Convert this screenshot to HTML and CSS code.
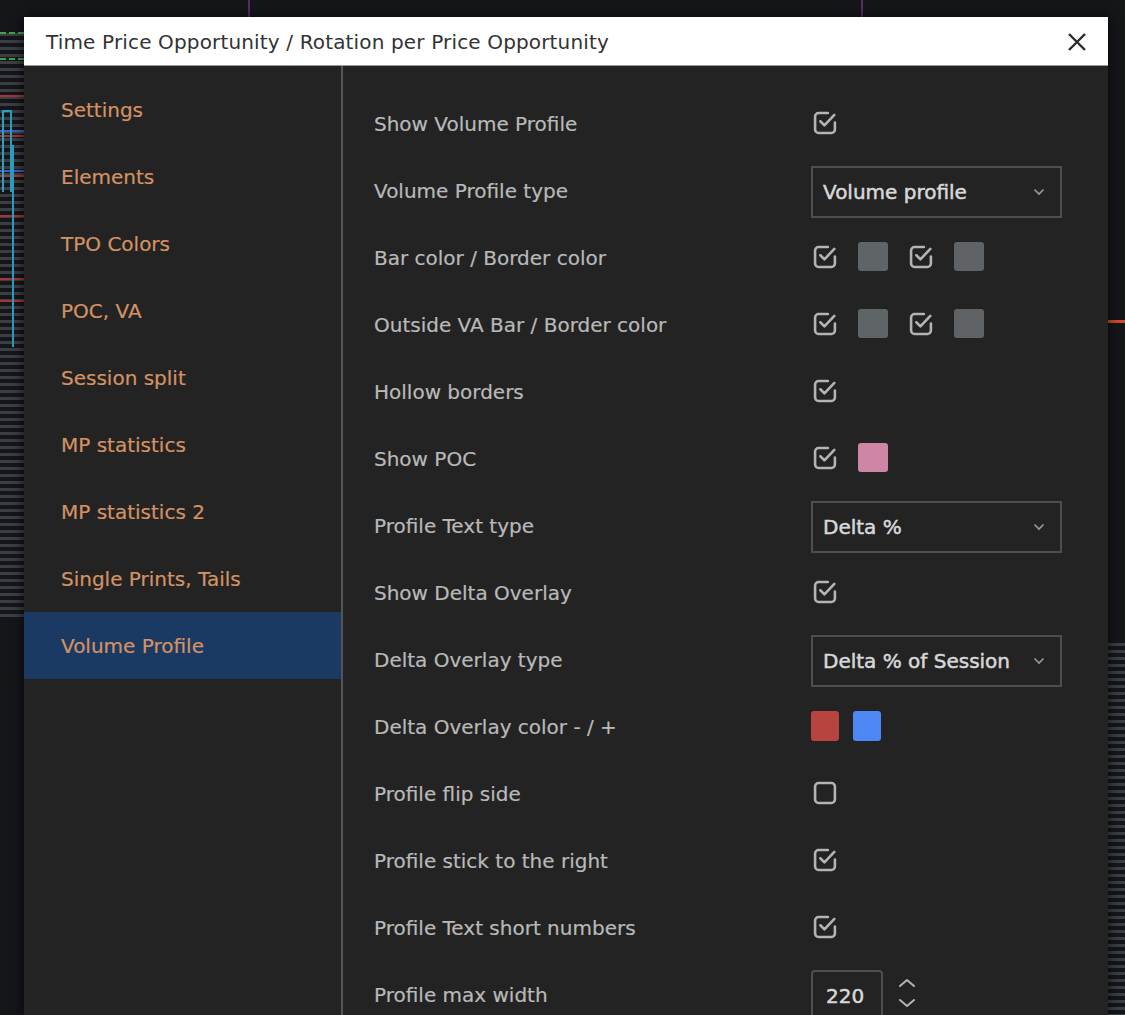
FILE: index.html
```html
<!DOCTYPE html>
<html>
<head>
<meta charset="utf-8">
<link rel="stylesheet" href="styles.css">
</head>
<body>
<div class="chart">
  <span class="vline v1"></span>
  <span class="vline v2"></span>
  <span class="grn g1"></span>
  <span class="grn g2"></span>
  <span class="rl" style="top:95px"></span>
  <span class="rl" style="top:135px"></span>
  <span class="rl" style="top:175px"></span>
  <span class="rl" style="top:215px"></span>
  <span class="rl" style="top:278px"></span>
  <span class="rl" style="top:300px"></span>
  <span class="bl" style="top:130px"></span>
  <span class="bl" style="top:170px"></span>
  <span class="cy c1"></span>
  <span class="cy c2"></span>
  <span class="rr1"></span>
  <span class="rstripes"></span>
</div>
<div class="dialog">
  <div class="titlebar">
    <span class="title">Time Price Opportunity / Rotation per Price Opportunity</span>
    <svg class="close" width="22" height="22" viewBox="0 0 22 22"><path d="M3 3 L19 19 M19 3 L3 19" stroke="#2b2b2b" stroke-width="2.4" fill="none"/></svg>
  </div>
  <div class="body">
    <nav class="nav">
      <div class="nav-item">Settings</div>
      <div class="nav-item">Elements</div>
      <div class="nav-item">TPO Colors</div>
      <div class="nav-item">POC, VA</div>
      <div class="nav-item">Session split</div>
      <div class="nav-item">MP statistics</div>
      <div class="nav-item">MP statistics 2</div>
      <div class="nav-item">Single Prints, Tails</div>
      <div class="nav-item active">Volume Profile</div>
    </nav>
    <div class="content">
      <div class="row"><span class="label">Show Volume Profile</span>
        <div class="ctrl"><svg class="cb" viewBox="0 0 24 24"><path d="M14.5 3.5 H6.5 a3 3 0 0 0 -3 3 V17.5 a3 3 0 0 0 3 3 H17.5 a3 3 0 0 0 3 -3 V11.5 M8 10.5 L11.5 14 L20 5"/></svg></div></div>
      <div class="row"><span class="label">Volume Profile type</span>
        <div class="ctrl"><div class="select"><span>Volume profile</span><svg class="chev" viewBox="0 0 12 8"><path d="M1.5 1.5 L6 6 L10.5 1.5"/></svg></div></div></div>
      <div class="row"><span class="label">Bar color / Border color</span>
        <div class="ctrl"><svg class="cb" viewBox="0 0 24 24"><path d="M14.5 3.5 H6.5 a3 3 0 0 0 -3 3 V17.5 a3 3 0 0 0 3 3 H17.5 a3 3 0 0 0 3 -3 V11.5 M8 10.5 L11.5 14 L20 5"/></svg><span class="sw gray"></span><svg class="cb" viewBox="0 0 24 24"><path d="M14.5 3.5 H6.5 a3 3 0 0 0 -3 3 V17.5 a3 3 0 0 0 3 3 H17.5 a3 3 0 0 0 3 -3 V11.5 M8 10.5 L11.5 14 L20 5"/></svg><span class="sw gray2"></span></div></div>
      <div class="row"><span class="label">Outside VA Bar / Border color</span>
        <div class="ctrl"><svg class="cb" viewBox="0 0 24 24"><path d="M14.5 3.5 H6.5 a3 3 0 0 0 -3 3 V17.5 a3 3 0 0 0 3 3 H17.5 a3 3 0 0 0 3 -3 V11.5 M8 10.5 L11.5 14 L20 5"/></svg><span class="sw gray"></span><svg class="cb" viewBox="0 0 24 24"><path d="M14.5 3.5 H6.5 a3 3 0 0 0 -3 3 V17.5 a3 3 0 0 0 3 3 H17.5 a3 3 0 0 0 3 -3 V11.5 M8 10.5 L11.5 14 L20 5"/></svg><span class="sw gray2"></span></div></div>
      <div class="row"><span class="label">Hollow borders</span>
        <div class="ctrl"><svg class="cb" viewBox="0 0 24 24"><path d="M14.5 3.5 H6.5 a3 3 0 0 0 -3 3 V17.5 a3 3 0 0 0 3 3 H17.5 a3 3 0 0 0 3 -3 V11.5 M8 10.5 L11.5 14 L20 5"/></svg></div></div>
      <div class="row"><span class="label">Show POC</span>
        <div class="ctrl"><svg class="cb" viewBox="0 0 24 24"><path d="M14.5 3.5 H6.5 a3 3 0 0 0 -3 3 V17.5 a3 3 0 0 0 3 3 H17.5 a3 3 0 0 0 3 -3 V11.5 M8 10.5 L11.5 14 L20 5"/></svg><span class="sw pink"></span></div></div>
      <div class="row"><span class="label">Profile Text type</span>
        <div class="ctrl"><div class="select"><span>Delta %</span><svg class="chev" viewBox="0 0 12 8"><path d="M1.5 1.5 L6 6 L10.5 1.5"/></svg></div></div></div>
      <div class="row"><span class="label">Show Delta Overlay</span>
        <div class="ctrl"><svg class="cb" viewBox="0 0 24 24"><path d="M14.5 3.5 H6.5 a3 3 0 0 0 -3 3 V17.5 a3 3 0 0 0 3 3 H17.5 a3 3 0 0 0 3 -3 V11.5 M8 10.5 L11.5 14 L20 5"/></svg></div></div>
      <div class="row"><span class="label">Delta Overlay type</span>
        <div class="ctrl"><div class="select"><span>Delta % of Session</span><svg class="chev" viewBox="0 0 12 8"><path d="M1.5 1.5 L6 6 L10.5 1.5"/></svg></div></div></div>
      <div class="row"><span class="label">Delta Overlay color - / +</span>
        <div class="ctrl tight"><span class="sw red"></span><span class="sw blue"></span></div></div>
      <div class="row"><span class="label">Profile flip side</span>
        <div class="ctrl"><svg class="cb" viewBox="0 0 24 24"><rect x="3.5" y="3.5" width="17" height="17" rx="3"/></svg></div></div>
      <div class="row"><span class="label">Profile stick to the right</span>
        <div class="ctrl"><svg class="cb" viewBox="0 0 24 24"><path d="M14.5 3.5 H6.5 a3 3 0 0 0 -3 3 V17.5 a3 3 0 0 0 3 3 H17.5 a3 3 0 0 0 3 -3 V11.5 M8 10.5 L11.5 14 L20 5"/></svg></div></div>
      <div class="row"><span class="label">Profile Text short numbers</span>
        <div class="ctrl"><svg class="cb" viewBox="0 0 24 24"><path d="M14.5 3.5 H6.5 a3 3 0 0 0 -3 3 V17.5 a3 3 0 0 0 3 3 H17.5 a3 3 0 0 0 3 -3 V11.5 M8 10.5 L11.5 14 L20 5"/></svg></div></div>
      <div class="row"><span class="label">Profile max width</span>
        <div class="ctrl"><div class="num">220</div><svg class="spin" viewBox="0 0 22 34"><path d="M4 8 L11 2 L18 8 M4 22 L11 28 L18 22"/></svg></div></div>
    </div>
  </div>
</div>
</body>
</html>
```
FILE: styles.css
```css
html, body {
  margin: 0;
  padding: 0;
  height: 1015px;
  overflow: hidden;
}
body {
  position: relative;
  background-color: #15161a;
  background-image:
    repeating-linear-gradient(180deg, #15161a 0 3px, #3b3e43 3px 6px, #15161a 6px 7px);
  background-size: 24px 590px;
  background-repeat: no-repeat;
  background-position: 0 30px;
  font-family: "DejaVu Sans", sans-serif;
  padding: 17px 17px 0 24px;
  box-sizing: border-box;
}
.chart { position: absolute; inset: 0; z-index: 0; }
.chart span { position: absolute; display: block; }
.vline { top: 0; width: 2px; height: 17px; background: #5b2a6a; }
.v1 { left: 248px; }
.v2 { left: 861px; }
.grn { left: 0; width: 24px; height: 0; border-top: 2px dashed #3aa84a; }
.g1 { top: 32px; }
.g2 { top: 58px; }
.rl { left: 0; width: 24px; height: 2px; background: #a8353a; }
.bl { left: 0; width: 24px; height: 2px; background: #3f62c8; }
.cy { width: 6px; border: 2px solid #2a9fc0; border-bottom: none; }
.c1 { left: 2px; top: 110px; height: 80px; }
.c2 { left: 11px; top: 145px; height: 200px; border-left: none; border-right: 2px solid #2a9fc0; width: 1px; }
.rr1 { left: 1108px; top: 320px; width: 17px; height: 3px; background: #d24a2a; }
.rstripes {
  left: 1108px; top: 640px; width: 17px; height: 375px;
  background: repeating-linear-gradient(180deg, #15161a 0 3px, #3a3f47 3px 6px, #15161a 6px 7px);
}
.dialog {
  position: relative;
  z-index: 1;
  width: 1084px;
  height: 998px;
  background: #232323;
  box-shadow: 0 0 12px rgba(0,0,0,0.7);
  display: flex;
  flex-direction: column;
}
.titlebar {
  height: 49px;
  background: #ffffff;
  border-bottom: 1px solid #9a9a9a;
  display: flex;
  align-items: center;
  justify-content: space-between;
  padding: 2px 20px 0 22px;
  box-sizing: border-box;
}
.title {
  font-size: 20px;
  color: #333333;
  letter-spacing: 0.15px;
}
.close { width: 22px; height: 22px; }
.body {
  flex: 1;
  display: flex;
  min-height: 0;
}
.nav {
  width: 317px;
  padding-top: 10px;
  border-right: 2px solid #555555;
  flex-shrink: 0;
}
.nav-item {
  height: 67px;
  display: flex;
  align-items: center;
  padding-left: 37px;
  font-size: 20px;
  color: #d49264;
  -webkit-text-stroke: 0.2px #d49264;
}
.nav-item.active { background: #1b3a63; }
.content {
  flex: 1;
  padding: 23px 0 0 31px;
}
.row {
  height: 67px;
  display: flex;
  align-items: center;
}
.label {
  width: 437px;
  font-size: 20px;
  color: #b9b9b9;
  padding-top: 2px;
  -webkit-text-stroke: 0.2px #b9b9b9;
}
.ctrl {
  display: flex;
  align-items: center;
  gap: 19px;
}
.ctrl.tight { gap: 14px; }
.cb {
  width: 28px;
  height: 28px;
  fill: none;
  stroke: #b4b4b4;
  stroke-width: 2.2;
  stroke-linecap: round;
  stroke-linejoin: round;
}
.sw {
  width: 30px;
  height: 29px;
  border-radius: 3px;
  display: block;
}
.gray { background: #5f6566; }
.gray2 { background: #5f6366; }
.pink { background: #cf85a5; }
.red { width: 28px; height: 30px; background: #b8443f; }
.blue { width: 28px; height: 30px; background: #4d86f5; }
.select {
  width: 251px;
  height: 52px;
  border: 2px solid #4e4e4e;
  box-sizing: border-box;
  display: flex;
  align-items: center;
  justify-content: space-between;
  padding: 0 15px 0 10px;
  font-size: 20px;
  color: #d8d8d8;
  -webkit-text-stroke: 0.5px #d8d8d8;
  margin-top: 4px;
}
.chev {
  width: 12px;
  height: 8px;
  fill: none;
  stroke: #9a9a9a;
  stroke-width: 1.6;
}
.num {
  width: 72px;
  height: 52px;
  border: 2px solid #4e4e4e;
  border-radius: 4px;
  box-sizing: border-box;
  display: flex;
  align-items: center;
  padding-left: 13px;
  font-size: 20px;
  color: #d8d8d8;
  -webkit-text-stroke: 0.5px #d8d8d8;
  margin-top: 4px;
}
.spin {
  width: 22px;
  height: 34px;
  fill: none;
  stroke: #b4b4b4;
  stroke-width: 2;
  stroke-linecap: round;
  stroke-linejoin: round;
  margin-left: -6px;
  margin-top: 2px;
}
```
